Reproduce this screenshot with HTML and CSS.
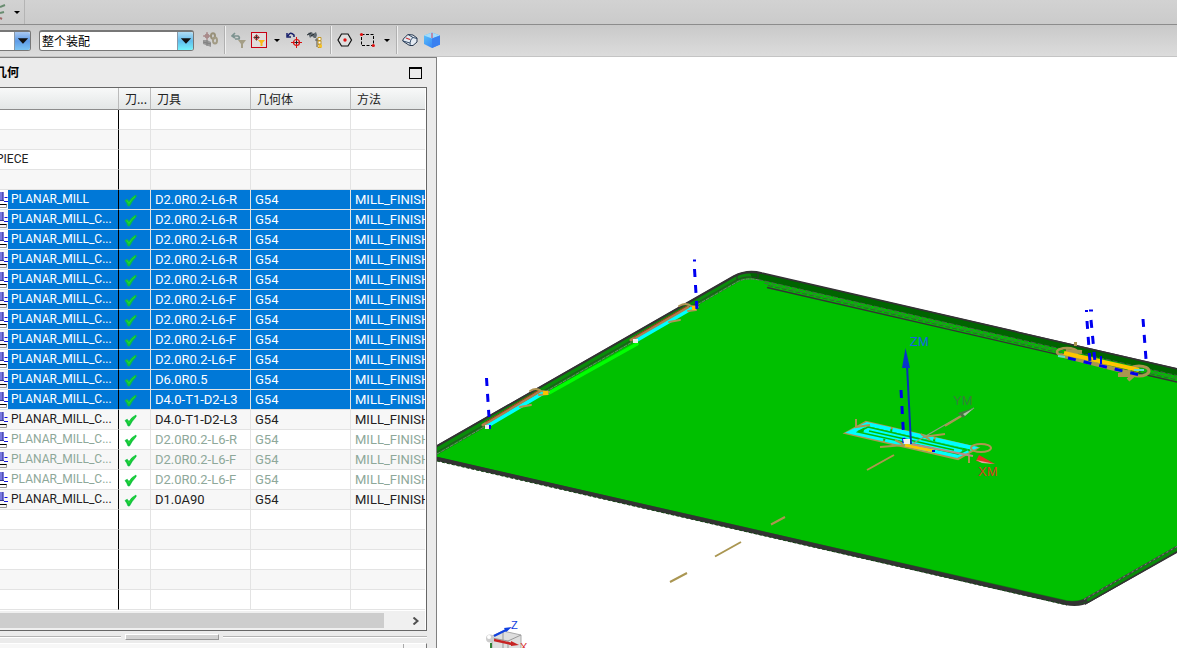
FILE: index.html
```html
<!DOCTYPE html>
<html lang="zh-CN">
<head>
<meta charset="utf-8">
<title>工序导航器 - 几何</title>
<link rel="stylesheet" href="styles.css">
</head>
<body>
<svg class="defs" aria-hidden="true">
  <defs>
    <symbol id="check" viewBox="0 0 13 13"><path d="M1 6.500L3.200 5.200L5 7.500Q7.500 3 12 1Q12.600 2.500 11.500 3.500Q8 7 5.500 12L4 12Q3 9 1 6.500Z" fill="#0cc13c" stroke="#0cc13c" stroke-width=".6"/><path d="M3 6.500L5 9.500Q7.500 5 11 2.500" fill="none" stroke="#2bdc30" stroke-width="1"/></symbol>
    <symbol id="mill" viewBox="0 0 8 20"><path d="M0 2h4v9H0z" fill="#7878e0"/><path d="M2.500 2v9" stroke="#5050b0"/><path d="M0 10.500h4" stroke="#30308c"/><path d="M4.500 7.500h3M4 11.500h4" stroke="#1414e0"/><path d="M0 14.500h7" stroke="#000"/><path d="M0 17.500h6.500v-3" fill="none" stroke="#999"/></symbol>
    <symbol id="caret" viewBox="0 0 11 16"><path d="M3 7h6L6 10z" fill="#000"/></symbol>
    <symbol id="drop" viewBox="0 0 16 18"><path d="M3 6h11L8.500 12z" fill="#111"/></symbol>
    <linearGradient id="cubeface" x1="0" x2="1" y2="1"><stop stop-color="#5cc6fa"/><stop offset="1" stop-color="#2a70f4"/></linearGradient>
  </defs>
</svg>

<header class="topbar">
  <button class="icon edge" aria-label="工具"><svg viewBox="0 0 11 20" width="11" height="20"><path d="M0 16l2 1" stroke="#a06868" stroke-width="2"/><path d="M0 5l5-2M0 11l4-1" stroke="#688c70" stroke-width="2"/></svg></button>
  <button class="icon caret" aria-label="更多"><svg width="11" height="16"><use href="#caret"/></svg></button>
  <span class="top-sep"></span>
</header>

<nav class="toolbar">
  <label class="combo combo-edge"><select aria-label="类型过滤器"><option></option></select><svg class="drop" width="16" height="18"><use href="#drop"/></svg></label>
  <label class="combo combo-scope"><select aria-label="选择范围"><option>整个装配</option></select><svg class="drop" width="16" height="18"><use href="#drop"/></svg></label>
  <button class="icon link" aria-label="链接"><svg viewBox="0 0 16 16" width="16" height="16"><path d="M1 8h4l4 2v5L1 12z" fill="#989898"/><path d="M1 10l8 2M5 8v6" stroke="#808080"/><path d="M5 0v8M1 4h8" stroke="#a07474"/><circle cx="5" cy="4" r="2" fill="none" stroke="#a08080"/><ellipse cx="11" cy="4" rx="2" ry="2.700" fill="none" stroke="#98917a" stroke-width="2"/><ellipse cx="13" cy="8.500" rx="2" ry="3" fill="none" stroke="#a29b84" stroke-width="2"/></svg></button>
  <span class="sep"></span>
  <div class="group tight">
    <button class="icon" aria-label="重置过滤器"><svg viewBox="0 0 16 16" width="16" height="16"><path d="M1 4h6q2 1 1 3H4M4 1L1 4l3 2" fill="none" stroke="#7d9390" stroke-width="1.700"/><path d="M7 8h8l-3 4v4h-2v-4z" fill="#a49e86"/></svg></button>
    <button class="icon" aria-label="点过滤器"><svg viewBox="0 0 16 16" width="16" height="16"><rect x=".5" y=".5" width="15" height="15" fill="#e2dcdc" stroke="#c80014"/><path d="M5.500 2.500v6M2.500 5.500h6" stroke="#333"/><circle cx="5.500" cy="5.500" r="2" fill="none" stroke="#b02020"/><path d="M7 8h7l-2.500 3v3h-2v-3z" fill="#f8b818"/></svg></button>
    <button class="icon caret" aria-label="过滤器菜单"><svg width="11" height="16"><use href="#caret"/></svg></button>
    <button class="icon" aria-label="移动点"><svg viewBox="0 0 16 16" width="16" height="16"><path d="M1 1v4h4M2 4Q4-1 8 3v2" fill="none" stroke="#18206c" stroke-width="1.500"/><path d="M10.500 5v11M5 10.500h11" stroke="#d81010"/><circle cx="10.500" cy="10.500" r="3" fill="none" stroke="#d81010" stroke-width="1.200"/><path d="M9 10.500h3M10.500 9v3" stroke="#222"/></svg></button>
    <button class="icon" aria-label="查找"><svg viewBox="0 0 16 16" width="18" height="16"><path d="M1 1l4-1 1 2 3-2 1 3-1 3H7L5 4 3 6z" fill="#606970"/><path d="M0 3l4-2M4 4l3-2" stroke="#20282c"/><path d="M8 8h3M10 6v9" stroke="#555"/><path d="M11 5.500h3v3h-3zM11 9h3v3h-3zM11 12.500h3v3h-3z" fill="#fff" stroke="#c29726"/><path d="M12 12.500h3v3h-3z" fill="#f6c32c"/></svg></button>
  </div>
  <span class="sep"></span>
  <div class="group">
    <button class="icon" aria-label="多边形选择"><svg viewBox="0 0 16 16" width="16" height="16"><path d="M4.500 2h6.500L14.500 8 11 14H4.500L1 8z" fill="#dedede" stroke="#111" stroke-width="1.200"/><circle cx="8" cy="8" r="1.700" fill="#e01010"/></svg></button>
    <button class="icon" aria-label="矩形选择"><svg viewBox="0 0 16 16" width="16" height="16"><rect x="2.500" y="2.500" width="12" height="11" fill="none" stroke="#000" stroke-dasharray="3 1.500"/><circle cx="2.500" cy="2.500" r="1.600" fill="#e01010"/><circle cx="14.300" cy="13.500" r="1.600" fill="#e01010"/></svg></button>
    <button class="icon caret" aria-label="选择菜单"><svg width="11" height="16"><use href="#caret"/></svg></button>
  </div>
  <span class="sep"></span>
  <div class="group last">
    <button class="icon" aria-label="实体"><svg viewBox="0 0 16 16" width="16" height="16"><path d="M.7 9q0-2 2.500-4L6 2.500l5 .5 4 3v4l-4 3.500-3.500 0z" fill="#e4eaf2" stroke="#26374e"/><path d="M8 13q0-6 3-7.500l4 1M6 2.500l5 3M1 9l7 2" fill="none" stroke="#314a68"/><path d="M4 6l4 1.500" stroke="#c83030" stroke-width="1.300"/></svg></button>
    <button class="icon" aria-label="着色"><svg viewBox="0 0 16 16" width="16" height="16"><path d="M0 3.500L8 .5l8 3v9L8 16l-8-4z" fill="url(#cubeface)"/><path d="M0 3.500L8 .5l8 3L8 6.500z" fill="#a0dcfc"/><path d="M8 6.500V16l8-3.500v-9z" fill="#3a80f0"/><path d="M8 1v5" stroke="#d23a5a"/></svg></button>
  </div>
</nav>

<main class="work">
  <section class="navigator">
    <div class="panel-title"><h1>几何</h1><button class="maximize" aria-label="最大化"></button></div>
    <div class="frame">
      <table class="ops">
        <colgroup><col class="c-name"><col class="c-path"><col class="c-tool"><col class="c-geo"><col></colgroup>
        <thead><tr><th aria-label="名称"></th><th>刀...</th><th>刀具</th><th>几何体</th><th>方法</th></tr></thead>
        <tbody>
          <tr><td></td><td></td><td></td><td></td><td></td></tr>
          <tr><td></td><td></td><td></td><td></td><td></td></tr>
          <tr><td><span class="root">PIECE</span></td><td></td><td></td><td></td><td></td></tr>
          <tr><td></td><td></td><td></td><td></td><td></td></tr>
          <tr class="sel"><td><div class="op"><svg><use href="#mill"/></svg><span>PLANAR_MILL</span></div></td><td><svg class="ok"><use href="#check"/></svg></td><td>D2.0R0.2-L6-R</td><td>G54</td><td>MILL_FINISH</td></tr>
          <tr class="sel"><td><div class="op"><svg><use href="#mill"/></svg><span>PLANAR_MILL_C...</span></div></td><td><svg class="ok"><use href="#check"/></svg></td><td>D2.0R0.2-L6-R</td><td>G54</td><td>MILL_FINISH</td></tr>
          <tr class="sel"><td><div class="op"><svg><use href="#mill"/></svg><span>PLANAR_MILL_C...</span></div></td><td><svg class="ok"><use href="#check"/></svg></td><td>D2.0R0.2-L6-R</td><td>G54</td><td>MILL_FINISH</td></tr>
          <tr class="sel"><td><div class="op"><svg><use href="#mill"/></svg><span>PLANAR_MILL_C...</span></div></td><td><svg class="ok"><use href="#check"/></svg></td><td>D2.0R0.2-L6-R</td><td>G54</td><td>MILL_FINISH</td></tr>
          <tr class="sel"><td><div class="op"><svg><use href="#mill"/></svg><span>PLANAR_MILL_C...</span></div></td><td><svg class="ok"><use href="#check"/></svg></td><td>D2.0R0.2-L6-R</td><td>G54</td><td>MILL_FINISH</td></tr>
          <tr class="sel"><td><div class="op"><svg><use href="#mill"/></svg><span>PLANAR_MILL_C...</span></div></td><td><svg class="ok"><use href="#check"/></svg></td><td>D2.0R0.2-L6-F</td><td>G54</td><td>MILL_FINISH</td></tr>
          <tr class="sel"><td><div class="op"><svg><use href="#mill"/></svg><span>PLANAR_MILL_C...</span></div></td><td><svg class="ok"><use href="#check"/></svg></td><td>D2.0R0.2-L6-F</td><td>G54</td><td>MILL_FINISH</td></tr>
          <tr class="sel"><td><div class="op"><svg><use href="#mill"/></svg><span>PLANAR_MILL_C...</span></div></td><td><svg class="ok"><use href="#check"/></svg></td><td>D2.0R0.2-L6-F</td><td>G54</td><td>MILL_FINISH</td></tr>
          <tr class="sel"><td><div class="op"><svg><use href="#mill"/></svg><span>PLANAR_MILL_C...</span></div></td><td><svg class="ok"><use href="#check"/></svg></td><td>D2.0R0.2-L6-F</td><td>G54</td><td>MILL_FINISH</td></tr>
          <tr class="sel"><td><div class="op"><svg><use href="#mill"/></svg><span>PLANAR_MILL_C...</span></div></td><td><svg class="ok"><use href="#check"/></svg></td><td>D6.0R0.5</td><td>G54</td><td>MILL_FINISH</td></tr>
          <tr class="sel"><td><div class="op"><svg><use href="#mill"/></svg><span>PLANAR_MILL_C...</span></div></td><td><svg class="ok"><use href="#check"/></svg></td><td>D4.0-T1-D2-L3</td><td>G54</td><td>MILL_FINISH</td></tr>
          <tr><td><div class="op"><svg><use href="#mill"/></svg><span>PLANAR_MILL_C...</span></div></td><td><svg class="ok"><use href="#check"/></svg></td><td>D4.0-T1-D2-L3</td><td>G54</td><td>MILL_FINISH</td></tr>
          <tr class="dim"><td><div class="op"><svg><use href="#mill"/></svg><span>PLANAR_MILL_C...</span></div></td><td><svg class="ok"><use href="#check"/></svg></td><td>D2.0R0.2-L6-R</td><td>G54</td><td>MILL_FINISH</td></tr>
          <tr class="dim"><td><div class="op"><svg><use href="#mill"/></svg><span>PLANAR_MILL_C...</span></div></td><td><svg class="ok"><use href="#check"/></svg></td><td>D2.0R0.2-L6-F</td><td>G54</td><td>MILL_FINISH</td></tr>
          <tr class="dim"><td><div class="op"><svg><use href="#mill"/></svg><span>PLANAR_MILL_C...</span></div></td><td><svg class="ok"><use href="#check"/></svg></td><td>D2.0R0.2-L6-F</td><td>G54</td><td>MILL_FINISH</td></tr>
          <tr><td><div class="op"><svg><use href="#mill"/></svg><span>PLANAR_MILL_C...</span></div></td><td><svg class="ok"><use href="#check"/></svg></td><td>D1.0A90</td><td>G54</td><td>MILL_FINISH</td></tr>
          <tr><td></td><td></td><td></td><td></td><td></td></tr>
          <tr><td></td><td></td><td></td><td></td><td></td></tr>
          <tr><td></td><td></td><td></td><td></td><td></td></tr>
          <tr><td></td><td></td><td></td><td></td><td></td></tr>
          <tr><td></td><td></td><td></td><td></td><td></td></tr>
        </tbody>
      </table>
      <div class="scroll"><div class="thumb"></div><button aria-label="向右滚动"><svg viewBox="0 0 8 8" width="8" height="8"><path d="M1.500 0.500L5.500 4l-4 3.500" fill="none" stroke="#505050" stroke-width="2"/></svg></button></div>
    </div>
    <div class="splitter"><span class="rule rule-left"></span><span class="grip"></span><span class="rule rule-right"></span></div>
    <div class="next-panel"><span class="next-body"></span><span class="next-end"></span></div>
  </section>

  <section class="view">
    <svg class="scene" viewBox="437 57 740 591" preserveAspectRatio="xMinYMin slice" role="img" aria-label="刀轨视图">
      <path d="M437 445L733 276Q746 269 762 273L1177 368V553L1090 602Q1080 608 1065 605L437 461Z" fill="#333"/>
      <path d="M437 447L735 277Q746 271 761 275L1177 370V551L1089 601Q1080 606 1068 603L437 457Z" fill="#0a8a0a"/>
      <path d="M750 273L762 274L1177 369V376L752 278Z" fill="#006400"/>
      <path d="M437 455L738 282Q746 277 756 279L1177 376V547L1086 598Q1076 602 1066 600L437 457Z" fill="#00c000"/>
      <path d="M437 458.500L1066 602.500Q1077 604 1087 600" fill="none" stroke="#333" stroke-width="3.500"/>
      <path d="M437 461L1067 605" fill="none" stroke="#164516" stroke-width="1" stroke-dasharray="3 2"/>
      <path d="M1084 599.500L1177 546.500" stroke="#404840" stroke-width="1.500"/>
      <path d="M1084 599.500L1177 546.500" stroke="#808080" stroke-width="1" stroke-dasharray="2 3"/>
      <path d="M1085 604.500L1177 552" stroke="#333"/>
      <g fill="none">
        <path d="M437 446L734 276Q747 269 762 273L1177 369" stroke="#333" stroke-width="1.700"/>
        <path d="M437 452L737 280Q746 275 758 278" stroke="#333" stroke-width=".8"/>
        <path d="M437 454L737 282Q746 277 759 280" stroke="#777" stroke-dasharray="4 1"/>
        <path d="M758 279.500L1177 375.500M764 283L1177 378" stroke="#4c604c" stroke-width=".9" stroke-dasharray="5 2"/>
        <path d="M768 285.500L1177 380" stroke="#3c503c" stroke-width=".9" stroke-dasharray="5 2"/>
        <path d="M767 287.500L1177 382" stroke="#333" stroke-width="1.400"/>
        <path d="M737 275v5M758 272v6" stroke="#333"/>
      </g>

      <!-- Left-edge tool paths -->
      <g fill="none" stroke-linecap="round">
        <path d="M549 393L637 344" stroke="#00ff00" stroke-width="3.500"/>
        <path d="M487 426L543 393M635 341L692 308" stroke="#00ffff" stroke-width="4"/>
        <path d="M483 425L540 391M631 340L688 307" stroke="#ae7e4c" stroke-width="3"/>
        <path d="M486 422L539 390M634 337L687 306" stroke="#a33018" stroke-width="1"/>
        <path d="M530 391q6-4 11 0l8 1M539 395l9-1M520 407l11-2M679 306q7-4 12 0l7 1M688 311l8-1M669 322l11-2" stroke="#b09555" stroke-width="2"/>
      </g>
      <path d="M543 391h5v4h-5zM692 306h4v4h-4z" fill="#ffc000"/>
      <path d="M485 425h6v4h-6zM633 339h5v4h-5z" fill="#eee"/>
      <path d="M490 425v4" stroke="#0000f0" stroke-width="2"/>
      <g fill="none" stroke="#0000f0" stroke-width="3" stroke-dasharray="8 8">
        <path d="M486.500 378L489 417"/>
        <path d="M694.500 269L697 310"/>
      </g>
      <path d="M693 260.500h3" stroke="#0000f0" stroke-width="2"/>

      <!-- Right-edge tool path -->
      <g fill="none">
        <ellipse cx="1067" cy="352" rx="10" ry="4" stroke="#aa9550" stroke-width="2.500"/>
        <ellipse cx="1139" cy="371" rx="10" ry="5" stroke="#aa9550" stroke-width="3"/>
        <path d="M1060 355L1138 375M1066 351l16 1M1118 375h18M1128 380l8-7M1074 344h3" stroke="#aa9550" stroke-width="4"/>
        <path d="M1064 353L1139 370" stroke="#ffc500" stroke-width="4"/>
        <path d="M1068 358L1144 376" stroke="#0000ee" stroke-width="3" stroke-dasharray="8 8"/>
        <path d="M1058 356l7 1M1134 370h10" stroke="#60dfca" stroke-width="2"/>
        <path d="M1087 321L1090 362M1091 320L1095 362M1143 319L1146 359" stroke="#0000f0" stroke-width="3" stroke-dasharray="8 8"/>
        <path d="M1085 311h3M1089 310.500h4M1101 356v8" stroke="#0000f0" stroke-width="2"/>
      </g>

      <!-- Central pocket path and work axes -->
      <g fill="none">
        <path d="M846 433L866 422L977 448L958 459Z" stroke="#ad9650" stroke-width="2.500"/>
        <path d="M851 432L867 424L973 448L957 456Z" stroke="#00ffff" stroke-width="4" stroke-dasharray="42 2"/>
        <path d="M864 430L962 452" stroke="#00ffff" stroke-width="8"/>
        <path d="M858 432L868 427L967 450L958 454Z" stroke="#08b80a" stroke-width="1.500"/>
        <path d="M869 431L954 450" stroke="#00bd00" stroke-width="1.300"/>
        <ellipse cx="981" cy="448" rx="10" ry="4" stroke="#ad9650" stroke-width="2"/>
        <path d="M856 419v8l14-2M880 447l25-2M923 437l22-3M895 440l8 4M921 434l9 6M969 463v-7M867 470L894 455" stroke="#ad9650" stroke-width="2"/>
        <path d="M905 445L934 451" stroke="#ffc500" stroke-width="3"/>
        <path d="M911 444L973 456" stroke="#bd8987" stroke-width="2"/>
        <path d="M912 444L974 408" stroke="#8ca27d" stroke-width="1.300"/>
        <path d="M945 426L965 414" stroke="#ad9650" stroke-width="2"/>
        <path d="M907 365L911 444" stroke="#0830bc" stroke-width="2"/>
        <path d="M901 390L904 443" stroke="#0000e8" stroke-width="3" stroke-dasharray="8 8"/>
      </g>
      <path d="M905.500 348L910 368H902Z" fill="#0834cc"/>
      <path d="M958 413L974 408L963 418Z" fill="#457642"/><path d="M963 414l11-6-9 8" fill="#a9caa1"/>
      <path d="M979 455L995 464L976 461Z" fill="#e53024"/><path d="M976 460l19 4-13-1" fill="#e5aaa0"/>
      <path d="M903 439h7v5h-6z" fill="#eee"/><path d="M932 451h3" stroke="#0000e0" stroke-width="2"/>
      <text x="910" y="346" class="axis" fill="#1760e8">ZM</text>
      <text x="953" y="405" class="axis" fill="#36813a">YM</text>
      <text x="978" y="476" class="axis" fill="#d83c20">XM</text>
      <path d="M771 524.500L785 517M715 556.500L741 542M670 582L687 573" stroke="#aa9652" stroke-width="2"/>

      <!-- View orientation triad -->
      <path d="M492 636L503 631L521 635V650H492Z" fill="#dedede" stroke="#aaa"/>
      <path d="M503 631v18M508 641l13-6M508 641v9M492 638l16 3" fill="none" stroke="#999"/>
      <path d="M494 636L508 629" stroke="#1040e0" stroke-width="2"/><path d="M504 628l8-1-6 5z" fill="#1040e0"/>
      <path d="M491 643v6" stroke="#318034" stroke-width="2"/>
      <path d="M494 640L512 644" stroke="#c72323" stroke-width="2.500"/><path d="M511 641l8 4-8 1z" fill="#c72323"/>
      <circle cx="490" cy="638.500" r="4" fill="#ccc"/><circle cx="489" cy="637" r="2" fill="#fff"/>
      <text x="511" y="629" class="triad" fill="#1040e0">Z</text>
      <text x="520" y="651" class="triad" fill="#d83030">X</text>
    </svg>
  </section>
</main>
</body>
</html>
```

FILE: styles.css
```css
* { box-sizing: border-box; }
body {
  margin: 0;
  height: 100vh;
  display: flex;
  flex-direction: column;
  overflow: hidden;
  background: #fff;
  color: #222;
  font: 12px/16px "Liberation Sans", "Noto Sans CJK SC", sans-serif;
}
.defs { display: block; width: 0; height: 0; position: absolute; }
button { padding: 0; border: 0; background: none; color: inherit; }
svg { display: block; }

.topbar {
  flex: none;
  display: flex;
  align-items: center;
  height: 25px;
  background: linear-gradient(#d2d2d2, #cbcbcb);
  border-bottom: 1px solid #8c8c8c;
}
.top-sep { height: 24px; border-left: 1px solid #b4b4b4; margin-left: 2px; }

.toolbar {
  flex: none;
  display: flex;
  align-items: center;
  height: 32px;
  padding-bottom: 1px;
  background: linear-gradient(#c9c9c9, #dcdcdc);
  border-bottom: 1px solid #c4c4c4;
}
.combo { position: relative; height: 21px; }
.combo select {
  display: block;
  appearance: none;
  width: 100%;
  height: 100%;
  margin: 0;
  padding: 0 20px 0 2px;
  border: 1px solid #777;
  border-top-width: 2px;
  border-radius: 3px;
  background: #fff;
  color: #000;
  font: 12px/16px "Noto Sans CJK SC", sans-serif;
}
.drop {
  position: absolute;
  right: 1px;
  top: 2px;
  border-left: 1px solid #8898a8;
  border-radius: 0 2px 2px 0;
  background: linear-gradient(#a9c8f0, #5e9be6 50%, #7cc4f4);
  pointer-events: none;
}
.combo-edge { width: 31px; margin-right: 8px; }
.combo-edge select { border-left: 0; border-radius: 0 3px 3px 0; }
.combo-scope { width: 155px; }
.combo-scope .drop { background: linear-gradient(#b0dcf4, #62bdec 50%, #74f4fc); }
.link { margin: 0 6px 0 8px; }
.sep {
  width: 2px;
  height: 28px;
  border-left: 1px solid #b0b0b0;
  border-right: 1px solid #f0f0f0;
}
.group { display: flex; gap: 6px; margin: 0 4px 0 5px; }
.group.tight { gap: 4px; margin-right: 6px; }
.group.last { margin-left: 4px; }

.work { flex: 1; display: flex; min-height: 0; }
.navigator {
  flex: none;
  width: 437px;
  display: flex;
  flex-direction: column;
  overflow: hidden;
  background: #ebebeb;
  border-top: 1px solid #808080;
  border-right: 1px solid #808080;
}
.panel-title {
  flex: none;
  display: flex;
  align-items: center;
  justify-content: space-between;
  height: 29px;
  padding-right: 14px;
}
.panel-title h1 {
  margin: 0 0 2px -5px;
  color: #000;
  font: bold 12px/16px "Noto Sans CJK SC", sans-serif;
}
.maximize { width: 13px; height: 12px; border: 1px solid #000; border-top-width: 2px; }
.frame {
  flex: none;
  width: 427px;
  background: #fff;
  border: solid #666;
  border-width: 1px 1px 1px 0;
  padding-right: 1px;
}
.ops {
  width: 100%;
  table-layout: fixed;
  border-collapse: separate;
  border-spacing: 0;
}
.c-name { width: 119px; }
.c-path { width: 32px; }
.c-tool, .c-geo { width: 100px; }
.ops th {
  height: 22px;
  padding: 0 0 0 6px;
  text-align: left;
  font: 12px/16px "Noto Sans CJK SC", sans-serif;
  white-space: nowrap;
  background: linear-gradient(#f8f9f9, #e3e6e6);
  border-right: 1px solid #bbb;
  border-bottom: 1px solid #8c8c8c;
}
.ops th:last-child { border-right: 0; }
.ops td {
  height: 20px;
  padding: 0 0 0 4px;
  overflow: hidden;
  vertical-align: top;
  white-space: nowrap;
  font: 13px/19px Roboto, "Noto Sans", sans-serif;
  border-right: 1px solid #e3e3e3;
  border-bottom: 1px solid #e3e3e3;
}
.ops td:first-child { padding-left: 0; border-right-color: #000; font-size: 12px; }
.ops td:nth-child(2) { padding-left: 5px; }
.ops td:last-child { border-right: 0; }
.ops tbody tr:nth-child(even) { background: #f7f7f7; }
.root { margin-left: -4px; }
.op { display: flex; height: 19px; }
.op svg { flex: none; width: 8px; height: 20px; }
.op span { flex: 1; padding-left: 3px; }
.ok { width: 13px; height: 13px; margin-top: 4px; }
.sel td { color: #fff; background: #0078d7; }
.sel td:first-child { background: none; border-bottom-color: #d8e8f4; }
.sel .op span { background: #0078d7; }
.dim td { color: #8ea89a; }

.scroll {
  display: flex;
  justify-content: space-between;
  height: 20px;
  padding: 2px 0 2px;
  border-top: 1px solid #fff;
  background: #f0f0f0;
}
.thumb { width: 384px; background: #cdcdcd; }
.scroll button { width: 18px; display: flex; align-items: center; justify-content: center; }

.splitter { flex: none; display: flex; align-items: center; height: 12px; padding-right: 9px; }
.rule { height: 2px; border-top: 1px solid #b4b4b4; border-bottom: 1px solid #fff; }
.rule-left { width: 121px; }
.rule-right { flex: 1; }
.grip {
  width: 94px;
  height: 6px;
  margin: 0 4px;
  background: #d2d2d2;
  border: 1px solid #fff;
  border-right-color: #999;
  border-bottom-color: #999;
}
.next-panel {
  flex: 1;
  display: flex;
  width: 427px;
  background: #f7f7f7;
  border-top: 1px solid #fff;
  border-right: 1px solid #777;
}
.next-body { width: 404px; border-right: 1px solid #aaa; }

.view { flex: 1; min-width: 0; background: #fff; }
.scene { width: 100%; height: 100%; }
.axis { font: 13px "Liberation Sans", sans-serif; }
.triad { font: 11px "Liberation Sans", sans-serif; }
```
